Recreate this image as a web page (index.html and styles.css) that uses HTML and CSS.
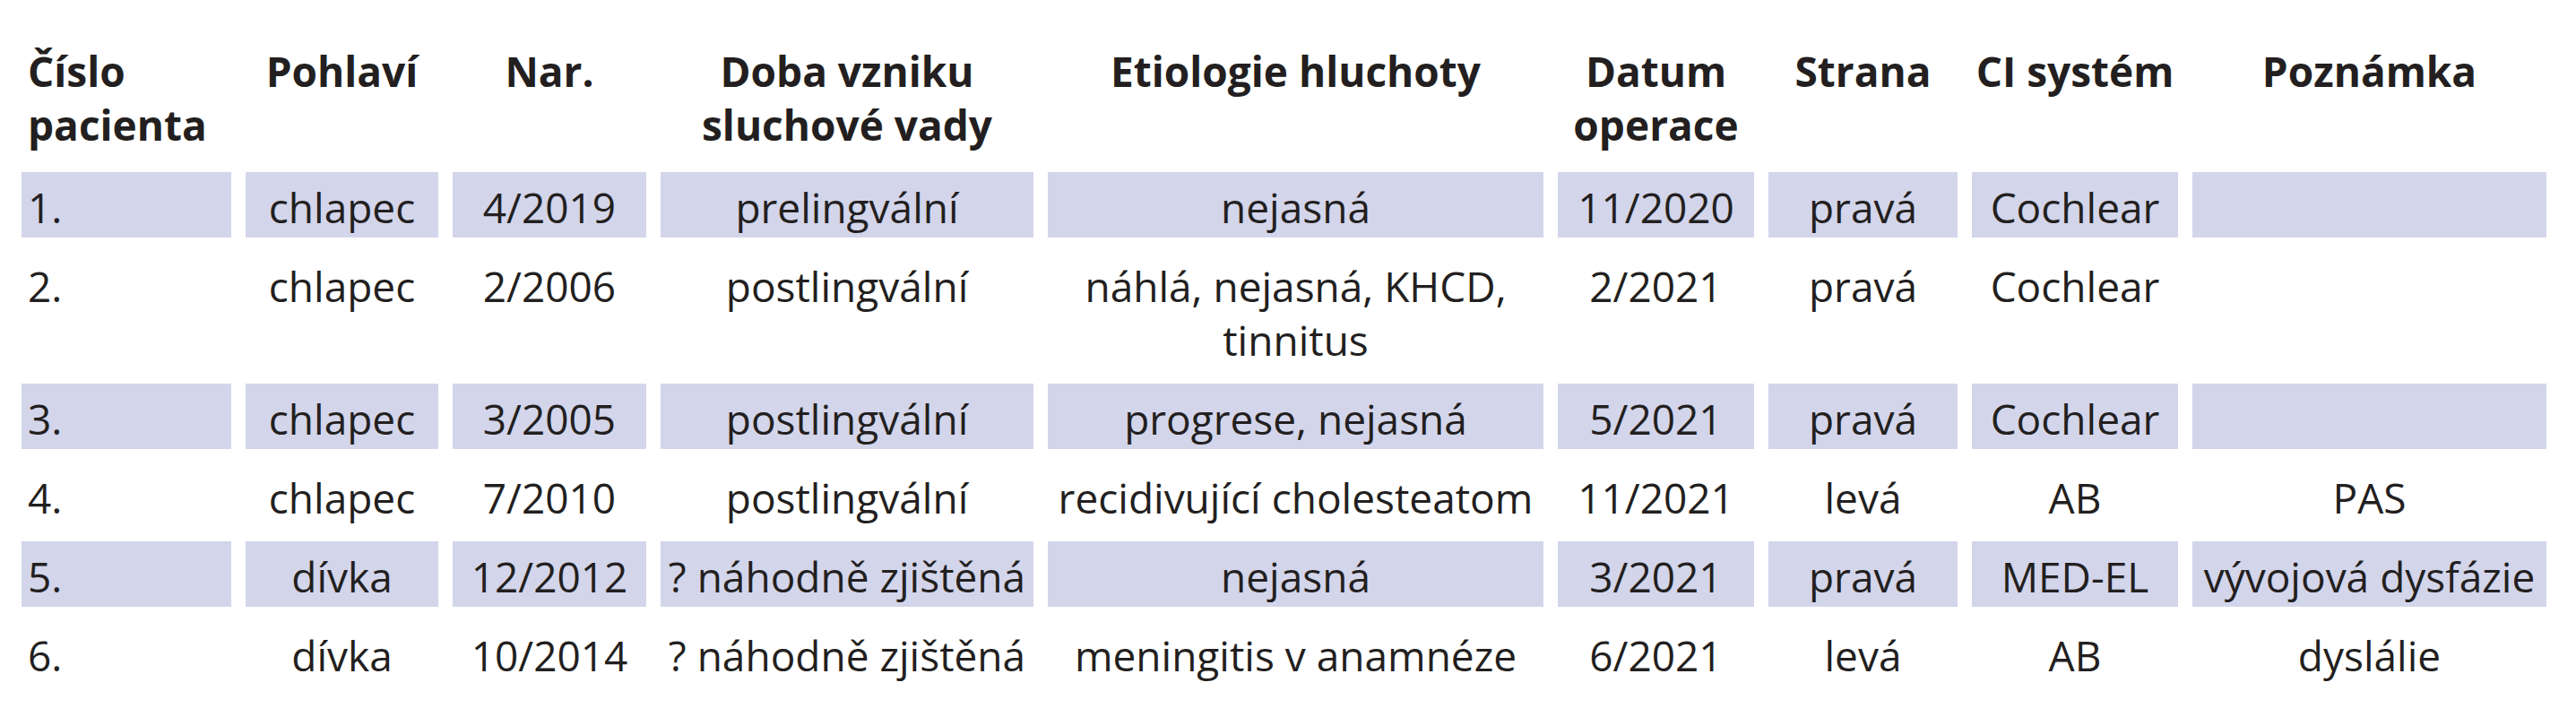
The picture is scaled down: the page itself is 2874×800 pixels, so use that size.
FILE: index.html
```html
<!DOCTYPE html>
<html lang="cs">
<head>
<meta charset="utf-8">
<title>Pacienti</title>
<link rel="stylesheet" href="styles.css">
</head>
<body>
<table class="patients">
  <colgroup>
    <col class="w-num">
    <col class="w-sex">
    <col class="w-born">
    <col class="w-onset">
    <col class="w-etio">
    <col class="w-date">
    <col class="w-side">
    <col class="w-ci">
    <col class="w-note">
  </colgroup>
  <thead>
    <tr>
      <th class="left">Číslo<br>pacienta</th>
      <th>Pohlaví</th>
      <th>Nar.</th>
      <th>Doba vzniku<br>sluchové vady</th>
      <th>Etiologie hluchoty</th>
      <th>Datum<br>operace</th>
      <th>Strana</th>
      <th>CI systém</th>
      <th>Poznámka</th>
    </tr>
  </thead>
  <tbody>
    <tr class="shaded">
      <td class="left">1.</td><td>chlapec</td><td>4/2019</td><td>prelingvální</td><td>nejasná</td><td>11/2020</td><td>pravá</td><td>Cochlear</td><td></td>
    </tr>
    <tr>
      <td class="left">2.</td><td>chlapec</td><td>2/2006</td><td>postlingvální</td><td>náhlá, nejasná, KHCD,<br>tinnitus</td><td>2/2021</td><td>pravá</td><td>Cochlear</td><td></td>
    </tr>
    <tr class="shaded">
      <td class="left">3.</td><td>chlapec</td><td>3/2005</td><td>postlingvální</td><td>progrese, nejasná</td><td>5/2021</td><td>pravá</td><td>Cochlear</td><td></td>
    </tr>
    <tr>
      <td class="left">4.</td><td>chlapec</td><td>7/2010</td><td>postlingvální</td><td>recidivující cholesteatom</td><td>11/2021</td><td>levá</td><td>AB</td><td>PAS</td>
    </tr>
    <tr class="shaded">
      <td class="left">5.</td><td>dívka</td><td>12/2012</td><td>? náhodně zjištěná</td><td>nejasná</td><td>3/2021</td><td>pravá</td><td>MED-EL</td><td>vývojová dysfázie</td>
    </tr>
    <tr>
      <td class="left">6.</td><td>dívka</td><td>10/2014</td><td>? náhodně zjištěná</td><td>meningitis v anamnéze</td><td>6/2021</td><td>levá</td><td>AB</td><td>dyslálie</td>
    </tr>
  </tbody>
</table>
</body>
</html>
```
FILE: styles.css
```css
html, body {
  background: #ffffff;
}

body {
  margin: 25px 8px 0;
  font-family: "Open Sans", "Noto Sans", sans-serif;
  color: #231f20;
}

.patients {
  table-layout: fixed;
  border-collapse: separate;
  border-spacing: 16px 15px;
  font-size: 46px;
  line-height: 60px;
}

.w-num   { width: 234px; }
.w-sex   { width: 215px; }
.w-born  { width: 216px; }
.w-onset { width: 416px; }
.w-etio  { width: 553px; }
.w-date  { width: 219px; }
.w-side  { width: 211px; }
.w-ci    { width: 230px; }
.w-note  { width: 395px; }

.patients th,
.patients td {
  padding: 9px 0 4px;
  text-align: center;
  vertical-align: top;
  white-space: nowrap;
}

.patients th {
  font-weight: 700;
  padding-bottom: 8px;
}

.patients .left {
  text-align: left;
  padding-left: 7px;
}

.shaded td {
  background: #d3d5eb;
}
```
